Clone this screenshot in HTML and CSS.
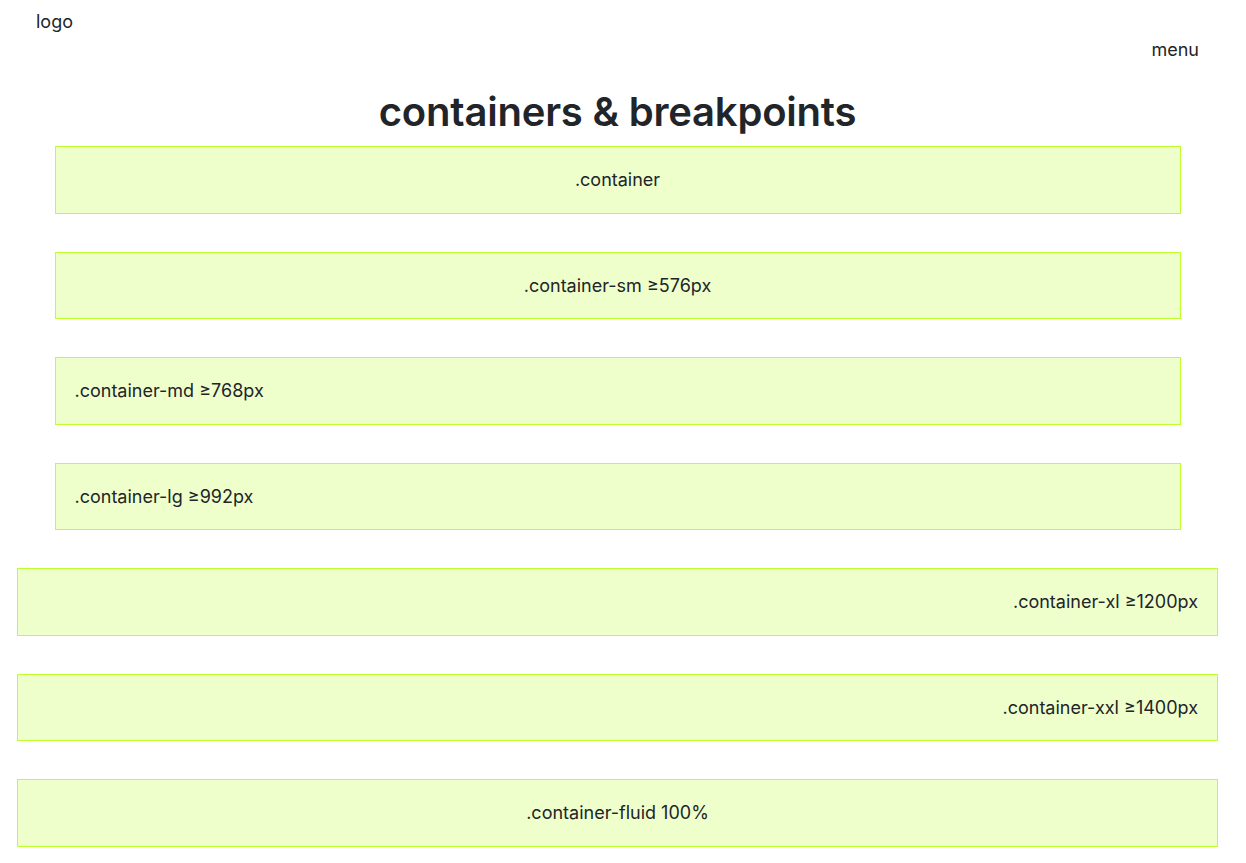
FILE: index.html
```html
<!DOCTYPE html>
<html lang="en">
<head>
<meta charset="utf-8">
<title>containers &amp; breakpoints</title>
<link rel="stylesheet" href="styles.css">
</head>
<body>
<div class="page">
  <header class="site-header">
    <div class="logo">logo</div>
    <nav class="menu">menu</nav>
  </header>
  <h1 class="title">containers &amp; breakpoints</h1>
  <div class="box narrow center">.container</div>
  <div class="box narrow center">.container-sm ≥576px</div>
  <div class="box narrow left">.container-md ≥768px</div>
  <div class="box narrow left">.container-lg ≥992px</div>
  <div class="box wide right">.container-xl ≥1200px</div>
  <div class="box wide right">.container-xxl ≥1400px</div>
  <div class="box wide center">.container-fluid 100%</div>
</div>
</body>
</html>
```

FILE: styles.css
```css
html, body {
  margin: 0;
  padding: 0;
  background: #ffffff;
}
body {
  font-family: Inter, "Liberation Sans", sans-serif;
  font-size: 18px;
  line-height: 27px;
  color: #212529;
}
.page {
  width: 1235px;
  display: flex;
  flex-direction: column;
  align-items: center;
}
.site-header {
  width: 1201px;
  box-sizing: border-box;
  padding: 8px 19px 0;
  display: flex;
  flex-direction: column;
}
.logo {
  align-self: flex-start;
}
.menu {
  align-self: flex-end;
  margin-top: 1px;
}
.title {
  margin: 25px 0 10px;
  font-size: 40px;
  line-height: 48px;
  font-weight: 600;
  letter-spacing: -0.2px;
}
.box {
  box-sizing: border-box;
  background: #efffcc;
  border: 1px solid #bdff2e;
  padding: 20px 19px;
  margin-bottom: 38px;
  height: 67.5px;
  line-height: 25.5px;
}
.narrow { width: 1126px; }
.wide { width: 1201px; }
.center { text-align: center; }
.left { text-align: left; }
.right { text-align: right; }
```
